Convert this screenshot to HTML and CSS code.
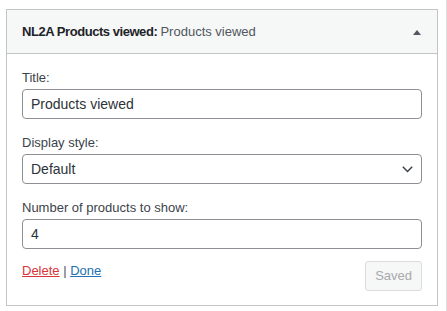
FILE: index.html
```html
<!DOCTYPE html>
<html lang="en">
<head>
<meta charset="utf-8">
<title>NL2A Products viewed widget</title>
<link rel="stylesheet" href="styles.css">
</head>
<body>
<div class="page">
  <div class="widget">
    <div class="widget-top">
      <h3 class="widget-title">NL2A Products viewed: <span class="in-title">Products viewed</span></h3>
      <svg class="toggle" width="8" height="5" viewBox="0 0 8 5" aria-hidden="true"><polygon points="0,5 4,0 8,5" fill="#50575e"/></svg>
    </div>
    <div class="widget-inside">
      <div class="field">
        <label class="field-label" for="title">Title:</label>
        <input class="control" id="title" type="text" value="Products viewed">
      </div>
      <div class="field">
        <label class="field-label" for="style">Display style:</label>
        <div class="select-wrap">
          <select class="control select" id="style">
            <option>Default</option>
          </select>
          <svg class="chevron" width="11" height="7" viewBox="0 0 11 7" aria-hidden="true"><polyline points="0.8,0.8 5.5,5.5 10.2,0.8" fill="none" stroke="#3c434a" stroke-width="1.5"/></svg>
        </div>
      </div>
      <div class="field">
        <label class="field-label" for="count">Number of products to show:</label>
        <input class="control number" id="count" type="number" value="4">
      </div>
      <div class="actions">
        <div class="links"><a class="delete" href="#">Delete</a><span class="sep"> | </span><a class="done" href="#">Done</a></div>
        <button class="saved" type="button" disabled>Saved</button>
      </div>
    </div>
  </div>
</div>
</body>
</html>
```
FILE: styles.css
```css
* {
  box-sizing: border-box;
}

html,
body {
  margin: 0;
  padding: 0;
  background: #fff;
}

body {
  font-family: "Liberation Sans", Arial, sans-serif;
  font-size: 13px;
  color: #3c434a;
}

.page {
  width: 447px;
  min-height: 311px;
  padding: 9px 0 0 6px;
  border-right: 1px solid #dcdcde;
}

.widget {
  width: 432px;
  border: 1px solid #c3c4c7;
  background: #fff;
}

.widget-top {
  display: flex;
  align-items: center;
  justify-content: space-between;
  height: 44px;
  padding: 1px 16px 0 15px;
  background: #f6f7f7;
  border-bottom: 1px solid #c3c4c7;
}

.widget-title {
  margin: 0;
  font-size: 13px;
  line-height: 18px;
  font-weight: 700;
  letter-spacing: -0.45px;
  color: #1d2327;
}

.in-title {
  font-weight: 400;
  letter-spacing: 0;
  color: #50575e;
}

.toggle {
  display: block;
}

.widget-inside {
  padding: 15px 15px 14px;
}

.field + .field {
  margin-top: 15px;
}

.field-label {
  display: block;
  line-height: 18px;
  margin-bottom: 2px;
  color: #3c434a;
}

.control {
  display: block;
  width: 100%;
  height: 30px;
  margin: 0;
  padding: 0 8px;
  border: 1px solid #8c8f94;
  border-radius: 4px;
  background: #fff;
  font-family: "Liberation Sans", Arial, sans-serif;
  font-size: 14px;
  color: #2c3338;
  outline: none;
}

.select-wrap {
  position: relative;
}

.select {
  -webkit-appearance: none;
  appearance: none;
  padding-right: 26px;
}

.chevron {
  position: absolute;
  right: 9px;
  top: 12px;
  pointer-events: none;
}

.number {
  -moz-appearance: textfield;
}

.number::-webkit-inner-spin-button,
.number::-webkit-outer-spin-button {
  -webkit-appearance: none;
  margin: 0;
}

.actions {
  display: flex;
  justify-content: space-between;
  align-items: flex-start;
  margin-top: 12px;
}

.links {
  padding-top: 1px;
  line-height: 18px;
}

.delete {
  color: #d63638;
}

.done {
  color: #2271b1;
}

.sep {
  color: #50575e;
}

.saved {
  height: 30px;
  margin: 0;
  padding: 0 9px;
  border: 1px solid #dcdcde;
  border-radius: 3px;
  background: #f6f7f7;
  color: #a7aaad;
  font-family: "Liberation Sans", Arial, sans-serif;
  font-size: 13px;
  line-height: 28px;
}
```
